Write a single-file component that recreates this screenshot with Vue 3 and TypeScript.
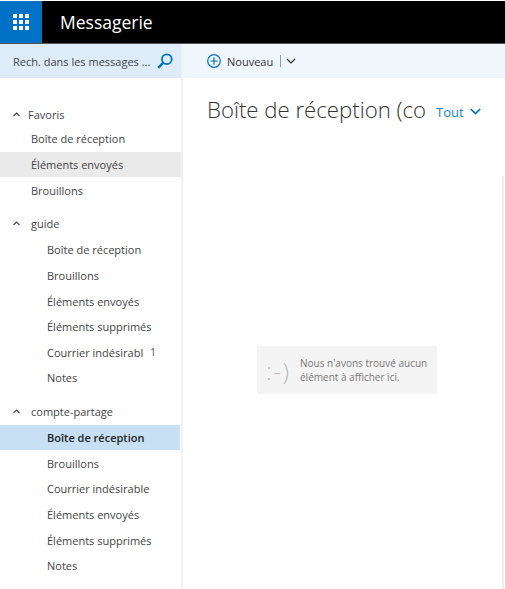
<script setup lang="ts">
interface Folder { name: string; count?: number; active?: boolean; hover?: boolean }
interface Group { name: string; sub: boolean; folders: Folder[] }
const groups: Group[] = [
  { name: 'Favoris', sub: false, folders: [
    { name: 'Boîte de réception' },
    { name: 'Éléments envoyés', hover: true },
    { name: 'Brouillons' },
  ] },
  { name: 'guide', sub: true, folders: [
    { name: 'Boîte de réception' },
    { name: 'Brouillons' },
    { name: 'Éléments envoyés' },
    { name: 'Éléments supprimés' },
    { name: 'Courrier indésirabl', count: 1 },
    { name: 'Notes' },
  ] },
  { name: 'compte-partage', sub: true, folders: [
    { name: 'Boîte de réception', active: true },
    { name: 'Brouillons' },
    { name: 'Courrier indésirable' },
    { name: 'Éléments envoyés' },
    { name: 'Éléments supprimés' },
    { name: 'Notes' },
  ] },
]
</script>

<template>
  <div class="page">
    <header class="top">
      <div class="waffle">
        <svg width="16" height="16" viewBox="0 0 16 16" fill="#fff">
          <rect x="0" y="0" width="4" height="4" /><rect x="6" y="0" width="4" height="4" /><rect x="12" y="0" width="4" height="4" />
          <rect x="0" y="6" width="4" height="4" /><rect x="6" y="6" width="4" height="4" /><rect x="12" y="6" width="4" height="4" />
          <rect x="0" y="12" width="4" height="4" /><rect x="6" y="12" width="4" height="4" /><rect x="12" y="12" width="4" height="4" />
        </svg>
      </div>
      <div class="brand">Messagerie</div>
    </header>
    <div class="body">
      <aside class="side">
        <div class="search">
          <span class="search-text">Rech. dans les messages ...</span>
          <svg class="search-icon" width="16" height="16" viewBox="0 0 16 16" fill="none" stroke="#0072c6">
            <circle cx="9.8" cy="6.2" r="4.9" stroke-width="1.8" />
            <path d="M6.3 9.7 1.2 14.8" stroke-width="2.4" />
          </svg>
        </div>
        <nav class="tree">
          <section v-for="g in groups" :key="g.name" class="group">
            <div :class="['group-head', { first: !g.sub }]">
              <svg class="caret" width="7" height="5" viewBox="0 0 7 5" fill="none" stroke="#444" stroke-width="1.1">
                <path d="M.5 4 3.5 1l3 3" />
              </svg>
              <span :class="['group-name', { wide: g.sub }]">{{ g.name }}</span>
            </div>
            <div
              v-for="f in g.folders"
              :key="f.name"
              :class="['row', { sub: g.sub, active: f.active, hover: f.hover }]"
            >
              <span>{{ f.name }}</span>
              <span v-if="f.count" class="count">{{ f.count }}</span>
            </div>
          </section>
        </nav>
      </aside>
      <main class="main">
        <div class="toolbar">
          <svg width="14" height="14" viewBox="0 0 14 14" fill="none" stroke="#0072c6" stroke-width="1.2">
            <circle cx="7" cy="7" r="6.3" />
            <path d="M7 3.3v7.4M3.3 7h7.4" />
          </svg>
          <span class="new">Nouveau</span>
          <span class="sep"></span>
          <svg width="10" height="6" viewBox="0 0 10 6" fill="none" stroke="#333" stroke-width="1.2">
            <path d="M1 1 5 5 9 1" />
          </svg>
        </div>
        <div class="content">
          <div class="title-row">
            <h1 class="title">Boîte de réception (co</h1>
            <span class="filter">Tout</span>
            <svg class="filter-caret" width="11" height="7" viewBox="0 0 11 7" fill="none" stroke="#0072c6" stroke-width="1.6">
              <path d="M.8 1 5.5 5.6 10.2 1" />
            </svg>
          </div>
          <div class="empty-wrap">
            <div class="empty">
              <span class="smiley">:-)</span>
              <span class="empty-text">Nous n'avons trouvé aucun<br />élément à afficher ici.</span>
            </div>
          </div>
        </div>
      </main>
    </div>
  </div>
</template>

<style>
html, body { margin: 0; background: #fff; }
</style>

<style scoped>
.page {
  width: 505px;
  height: 589px;
  overflow: hidden;
  display: flex;
  flex-direction: column;
  font-family: "Open Sans", "Liberation Sans", sans-serif;
  color: #333;
  background: #fff;
}
.top {
  margin-top: 1px;
  height: 43px;
  flex: none;
  display: flex;
  align-items: center;
  background: #000;
  border-bottom: 1px solid #555;
  box-sizing: border-box;
}
.waffle {
  width: 42px;
  height: 100%;
  background: #0072c6;
  display: flex;
  align-items: center;
  justify-content: center;
}
.brand {
  margin-left: 18px;
  color: #fff;
  font-size: 17.5px;
}
.body { flex: 1; display: flex; min-height: 0; }
.side {
  width: 181px;
  flex: none;
  border-right: 2px solid #f1f1f1;
}
.search {
  height: 34px;
  background: #deecf9;
  display: flex;
  align-items: center;
  justify-content: space-between;
  padding: 0 8px 0 13px;
}
.search-text { font-size: 11px; color: #444; white-space: nowrap; }
.tree { padding-top: 25px; }
.group { margin-bottom: 8px; }
.group-head {
  height: 26px;
  display: flex;
  align-items: center;
  padding-left: 13px;
  font-size: 11px;
  color: #444;
}
.group-head.first { height: 23px; }
.group-name { margin-left: 8px; }
.group-name.wide { margin-left: 11px; }
.row {
  height: 25.65px;
  display: flex;
  align-items: center;
  padding-left: 31px;
  font-size: 11px;
  color: #444;
  white-space: nowrap;
}
.row.sub { padding-left: 47px; }
.row.hover { background: #eaeaea; }
.row.active { background: #c7e0f4; color: #222; font-weight: 600; margin-right: 1px; }
.count { margin-left: 7px; font-size: 10px; }
.main { flex: 1; min-width: 0; display: flex; flex-direction: column; }
.toolbar {
  height: 34px;
  flex: none;
  background: #eff6fc;
  display: flex;
  align-items: center;
  padding-left: 24px;
}
.new { margin-left: 6px; font-size: 11px; color: #333; }
.sep { width: 1px; height: 12px; background: #999; margin: 0 5px 0 7px; }
.content {
  flex: 1;
  display: flex;
  flex-direction: column;
  margin-right: 1px;
}
.title-row {
  display: flex;
  align-items: center;
  padding: 14px 0 0 24px;
  height: 34px;
}
.title {
  margin: 0;
  font-size: 22.2px;
  font-weight: 300;
  color: #333;
  white-space: nowrap;
  width: 221px;
  overflow: hidden;
}
.filter { margin: 5px 6px 0 8px; font-size: 13px; color: #1a7fd0; }
.filter-caret { margin-top: 4px; }
.empty-wrap {
  flex: 1;
  margin-top: 50px;
  padding: 170px 0 0 74px;
  border-right: 2px solid #ececec;
}
.empty {
  width: 180px;
  height: 48px;
  background: #f4f4f4;
  display: flex;
  align-items: center;
  box-sizing: border-box;
  padding-left: 9px;
}
.smiley { font-size: 24px; font-weight: 300; color: #bbb; width: 34px; white-space: nowrap; letter-spacing: 1.5px; }
.empty-text { font-size: 10px; line-height: 14px; color: #777; }
</style>
